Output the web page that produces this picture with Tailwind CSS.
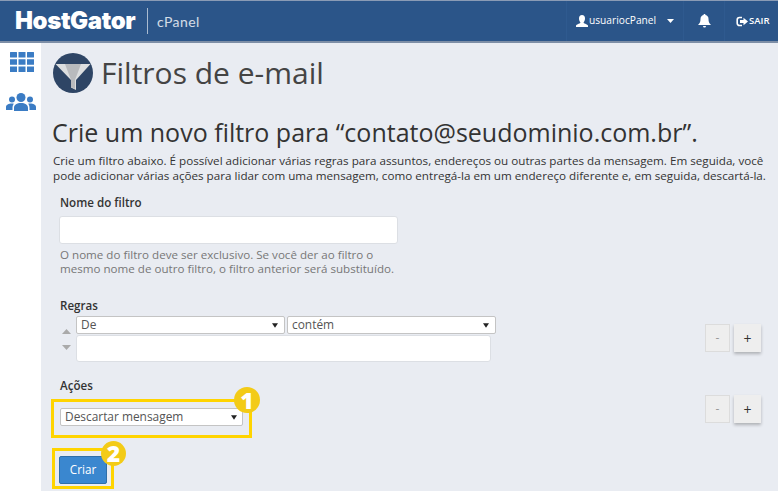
<!DOCTYPE html>
<html><head><meta charset="utf-8"><script src="https://cdn.jsdelivr.net/npm/@tailwindcss/browser@4"></script></head>
<body class="w-[778px] h-[491px] overflow-hidden bg-white font-['Open_Sans',sans-serif] text-[#333]">
<header class="h-[43px] bg-[#2b5589] border-t border-[#8a9bb5] border-b-2 border-b-[#7d8ea6] flex items-center text-white">
  <div class="flex items-center pl-[15px] w-[566px]">
    <span class="font-['Inter',sans-serif] font-black text-[24px] tracking-[-0.4px] leading-none w-[132px]">HostGator</span>
    <span class="w-px h-[26px] bg-white/60"></span>
    <span class="font-['Lato',sans-serif] text-[14px] ml-[9px] text-white/80 tracking-[0.4px]">cPanel</span>
  </div>
  <div class="flex items-center h-full flex-1 text-[10.2px]">
    <div class="w-[117px] h-full flex items-center pl-[9px] border-l border-[#2f5a8f]">
      <svg class="w-[12px] h-[12px] mr-[1px]" viewBox="0 0 12 12" fill="#fff"><path d="M6 0c2 0 3 1.500 3 3.500S8 7 7.500 7.500c0 1 3.500 1.500 4.500 3V12H0v-1.500c1-1.500 4.500-2 4.500-3C4 7 3 5.500 3 3.500S4 0 6 0z"/></svg>
      <span>usuariocPanel</span>
      <svg class="w-[7px] h-[4px] ml-[11px]" viewBox="0 0 7 4" fill="#fff"><path d="M0 0h7L3.500 4z"/></svg>
    </div>
    <div class="w-[42px] h-full flex items-center justify-center border-x border-[#2f5a8f]">
      <svg class="w-[13px] h-[14px]" viewBox="0 0 13 14" fill="#fff"><path d="M6.500 0c.6 0 1 .4 1 1 2 .4 3 2 3 4 0 3 .8 4.500 2.500 6H0c1.700-1.500 2.500-3 2.500-6 0-2 1-3.600 3-4 0-.6.400-1 1-1zM5 12h3a1.500 1.500 0 0 1-3 0z"/></svg>
    </div>
    <div class="flex items-center pl-[11px] text-[9.5px] font-semibold">
      <svg class="w-[12px] h-[11px] mr-[1px]" viewBox="0 0 12 11" fill="none" stroke="#fff"><path stroke-width="1.600" d="M6 1.500H3.500a2.300 2.300 0 0 0-2.300 2.300v3.400a2.300 2.300 0 0 0 2.300 2.300H6"/><path fill="#fff" stroke="none" d="M4 4h3.500V1.800L12 5.500 7.500 9.200V7H4z"/></svg>
      <span>SAIR</span>
    </div>
  </div>
</header>
<div class="flex h-[448px]">
  <aside class="w-[41px] shrink-0 bg-white flex flex-col items-center pt-[9px] gap-[21px]">
    <svg class="w-[24px] h-[20px] ml-[2px]" viewBox="0 0 24 20" fill="#3b7cc4"><path d="M.5 0h6a.5.5 0 0 1 .5.5v4.600a.5.5 0 0 1-.5.5h-6a.5.5 0 0 1-.5-.5V.5A.5.5 0 0 1 .5 0zM8.500 0h7v5.600h-7zM17.500 0h6a.5.5 0 0 1 .5.5v4.600a.5.5 0 0 1-.5.5h-6a.5.5 0 0 1-.5-.5V.5a.5.5 0 0 1 .5-.5zM0 7.200h7v5.600H0zM8.500 7.200h7v5.600h-7zM17 7.200h7v5.600h-7zM0 14.400h7V20H0zM8.500 14.400h7V20h-7zM17 14.400h7V20h-7z"/></svg>
    <svg class="w-[30px] h-[18px] ml-[1px]" viewBox="0 0 30 18" fill="#3b7cc4"><circle cx="15" cy="4.500" r="4.500"/><circle cx="6" cy="6.500" r="3"/><circle cx="24" cy="6.500" r="3"/><path d="M8 18v-3c0-3.500 3-5 7-5s7 1.500 7 5v3zM0 17v-3c0-2 2.500-3.500 6-3.500 .8 0 1.300 0 1.800.2C6.800 12 6.500 13.500 6.500 15v2zM30 17v-3c0-2-2.500-3.500-6-3.500-.8 0-1.300 0-1.800.2 1 1.300 1.300 2.800 1.300 4.300v2z"/></svg>
  </aside>
  <main class="relative flex-1 bg-[#e9ecf2] pl-[12px]">
    <div class="flex items-center h-[40px] pt-0 mt-[10px]">
      <svg class="w-[40px] h-[40px] shrink-0" viewBox="0 0 40 40"><circle cx="20" cy="20" r="20" fill="#2e4565"/><path d="M2.500 11h35L23 27v10l-5-2.500V27z" fill="#dcdedf"/><path d="M12 11h16L22 27v9l-4-2V27z" fill="#b8babd"/></svg>
      <h1 class="text-[30px] leading-none ml-[8px] text-[#444]">Filtros de e-mail</h1>
    </div>
    <h2 class="text-[25px] leading-[30px] mt-[24px] -ml-[1px] whitespace-nowrap">Crie um novo filtro para “contato@seudominio.com.br”.</h2>
    <p class="text-[11.66px] leading-[15px] mt-[6px] w-[716px]">Crie um filtro abaixo. É possível adicionar várias regras para assuntos, endereços ou outras partes da mensagem. Em seguida, você pode adicionar várias ações para lidar com uma mensagem, como entregá-la em um endereço diferente e, em seguida, descartá-la.</p>
    <div class="pl-[6px] mt-[12px]">
      <label class="block ml-[1px] text-[11.6px] font-semibold leading-[15px]">Nome do filtro</label>
      <div class="w-[339px] h-[28px] mt-[6px] bg-white border border-[#dcdfe4] rounded-[3px]"></div>
      <p class="text-[11.6px] leading-[14px] mt-[4px] ml-[1px] w-[345px] text-[#777]">O nome do filtro deve ser exclusivo. Se você der ao filtro o mesmo nome de outro filtro, o filtro anterior será substituído.</p>
      <label class="block ml-[1px] text-[11.6px] font-semibold leading-[15px] mt-[22px]">Regras</label>
    </div>
    <div class="flex mt-[3px] pr-[17px]">
      <div class="w-[23px] flex flex-col items-center pl-[3px] pt-[13px] gap-[11px] shrink-0">
        <svg class="w-[9px] h-[5px]" viewBox="0 0 9 5" fill="#aaa"><path d="M4.500 0L9 5H0z"/></svg>
        <svg class="w-[9px] h-[5px]" viewBox="0 0 9 5" fill="#aaa"><path d="M4.500 5L9 0H0z"/></svg>
      </div>
      <div class="w-[420px] shrink-0">
        <div class="flex gap-[2px]">
          <div class="w-[209px] h-[18px] bg-white border border-[#c4c4c4] rounded-[2px] flex items-center justify-between px-[4px] text-[11.9px] text-[#555]">De<svg class="w-[6px] h-[5px] mr-[2px]" viewBox="0 0 7 5" fill="#222"><path d="M0 0h7L3.500 5z"/></svg></div>
          <div class="w-[209px] h-[18px] bg-white border border-[#c4c4c4] rounded-[2px] flex items-center justify-between px-[4px] text-[11.9px] text-[#555]">contém<svg class="w-[6px] h-[5px] mr-[2px]" viewBox="0 0 7 5" fill="#222"><path d="M0 0h7L3.500 5z"/></svg></div>
        </div>
        <div class="w-[415px] h-[27px] mt-[1px] bg-white border border-[#dcdfe4] rounded-[3px]"></div>
      </div>
      <div class="ml-auto flex gap-[4px] mt-[8px] self-start">
        <div class="w-[25px] h-[28px] bg-[#eeeeee] border border-[#dcdcdc] flex items-center justify-center text-[12px] text-[#999]">-</div>
        <div class="w-[27px] h-[28px] bg-[#eeeeee] shadow-[0_2px_3px_rgba(0,0,0,.25)] flex items-center justify-center text-[14px] text-[#333]">+</div>
      </div>
    </div>
    <label class="block text-[11.6px] font-semibold leading-[15px] ml-[7px] mt-[16px]">Ações</label>
    <div class="flex pr-[17px]">
      <div class="w-[183px] h-[18px] ml-[7px] mt-[15px] shrink-0 bg-white border border-[#c4c4c4] rounded-[2px] flex items-center justify-between px-[4px] text-[11.9px] text-[#555]">Descartar mensagem<svg class="w-[6px] h-[5px] mr-[1px]" viewBox="0 0 7 5" fill="#222"><path d="M0 0h7L3.500 5z"/></svg></div>
      <div class="ml-auto flex gap-[4px] mt-[2px] self-start">
        <div class="w-[25px] h-[28px] bg-[#eeeeee] border border-[#dcdcdc] flex items-center justify-center text-[12px] text-[#999]">-</div>
        <div class="w-[27px] h-[28px] bg-[#eeeeee] shadow-[0_2px_3px_rgba(0,0,0,.25)] flex items-center justify-center text-[14px] text-[#333]">+</div>
      </div>
    </div>
    <button class="block ml-[6px] mt-[30px] w-[48px] h-[28px] bg-[#3a87cf] border border-[#2f6fa8] rounded-[2px] text-white text-[11.7px]">Criar</button>
    <div class="absolute left-[10px] top-[356px] w-[201px] h-[39px] border-[3px] border-[#ffd400]"></div>
    <div class="absolute left-[11px] top-[405px] w-[62px] h-[41px] border-[3px] border-[#ffd400]"></div>
    <div class="absolute left-[193px] top-[344px] w-[26px] h-[26px] rounded-full bg-[#f3cb17] text-white text-[23px] font-extrabold flex items-center justify-center leading-none">1</div>
    <div class="absolute left-[60px] top-[398px] w-[25px] h-[25px] rounded-full bg-[#f3cb17] text-white text-[23px] font-extrabold flex items-center justify-center leading-none">2</div>
  </main>
</div>
</body></html>
